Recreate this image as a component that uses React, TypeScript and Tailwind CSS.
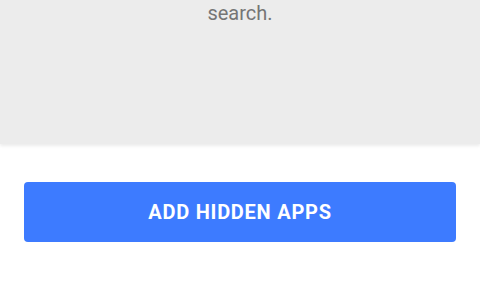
export default function App() {
  return (
    <div
      className="flex h-[281px] w-[480px] flex-col bg-white"
      style={{ fontFamily: "Roboto, 'Noto Sans', sans-serif" }}
    >
      {/* empty-state panel, only its last line is on screen */}
      <div className="h-[144px] bg-[#ececec] shadow-[0_2px_3px_rgba(0,0,0,0.08)]">
        <p className="-mt-[2px] text-center text-[20px] leading-[30px] text-[#757575]">
          search.
        </p>
      </div>
      <div className="px-6 pt-[38px]">
        <button className="flex h-[60px] w-full items-center justify-center rounded bg-[#3d7bff] text-[20px] font-bold tracking-[0.75px] text-white">
          ADD HIDDEN APPS
        </button>
      </div>
    </div>
  );
}
